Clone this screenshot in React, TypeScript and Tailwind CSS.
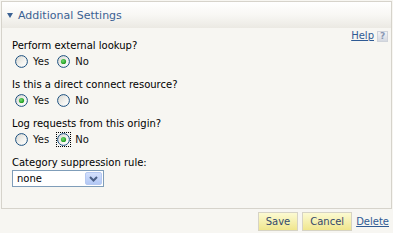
import React from "react";

const FONT = "font-['DejaVu_Sans',Verdana,sans-serif]";

interface RadioProps {
  checked?: boolean;
  focused?: boolean;
}

function Radio({ checked = false, focused = false }: RadioProps) {
  const svg = (
    <svg width="13" height="13" viewBox="0 0 13 13" className="block">
      <defs>
        <linearGradient id="rg" x1="0" y1="0" x2="1" y2="1">
          <stop offset="0" stopColor="#d6d5cf" />
          <stop offset="0.6" stopColor="#f4f4f1" />
          <stop offset="1" stopColor="#ffffff" />
        </linearGradient>
        <radialGradient id="dot" cx="0.4" cy="0.4" r="0.6">
          <stop offset="0" stopColor="#6fdc6f" />
          <stop offset="1" stopColor="#1f9a1f" />
        </radialGradient>
      </defs>
      <circle cx="6.5" cy="6.5" r="5.9" fill="url(#rg)" stroke="#1c5180" strokeWidth="1" />
      {checked && <circle cx="6.5" cy="6.5" r="2.6" fill="url(#dot)" />}
    </svg>
  );
  if (focused) {
    return (
      <span className="-m-px block border border-dotted border-black">{svg}</span>
    );
  }
  return svg;
}

interface GroupProps {
  label: string;
  value: "yes" | "no";
  focusNo?: boolean;
  first?: boolean;
}

function RadioGroup({ label, value, focusNo, first }: GroupProps) {
  return (
    <div className={first ? "" : "mt-[10px]"}>
      <div className="h-[12px] leading-[12px] text-black">{label}</div>
      <div className="mt-[2px] flex h-[15px] items-center pl-[3px] leading-[12px] text-[#111]">
        <Radio checked={value === "yes"} />
        <span className="ml-[5px]">Yes</span>
        <span className="ml-[8px]">
          <Radio checked={value === "no"} focused={focusNo} />
        </span>
        <span className="ml-[5px]">No</span>
      </div>
    </div>
  );
}

export default function App() {
  return (
    <div className={`h-[233px] w-full bg-[#f7f6f2] pt-px text-[10px] ${FONT}`}>
      <div className="mx-px border border-[#d6d3cb]">
        {/* Header */}
        <div className="flex h-[26px] items-center bg-gradient-to-b from-white via-[#f8f7f4] to-[#ebe9e3] pl-[5px]">
          <svg width="6" height="5" viewBox="0 0 6 5" className="mt-px">
            <path d="M0 0 H6 L3 5 Z" fill="#3b6193" />
          </svg>
          <span className="ml-[5px] text-[11px] leading-[13px] text-[#3b6193]">
            Additional Settings
          </span>
        </div>

        {/* Body */}
        <div className="pl-[10px] pr-[3px] pb-[21px] pt-[2px]">
          <div className="flex h-[10px] items-start justify-end">
            <a href="#" className="leading-[12px] text-[#2f5a94] underline">
              Help
            </a>
            <span className="ml-[3px] mt-px flex h-[11px] w-[11px] items-center justify-center border border-[#cfd3da] bg-gradient-to-b from-[#f2f3f6] to-[#d5d9e1] text-[9px] font-bold leading-none text-[#8a98b3]">
              ?
            </span>
          </div>

          <RadioGroup first label="Perform external lookup?" value="no" />
          <RadioGroup label="Is this a direct connect resource?" value="yes" />
          <RadioGroup label="Log requests from this origin?" value="no" focusNo />

          <div className="mt-[10px]">
            <div className="h-[12px] leading-[12px] text-black">Category suppression rule:</div>
            <div className="mt-px flex h-[17px] w-[92px] items-center justify-between border border-[#7f9db9] bg-white pl-[4px] pr-px">
              <span className="leading-[12px] text-black">none</span>
              <span className="flex h-[13px] w-[17px] items-center justify-center rounded-[2px] border border-[#b6c9f2] bg-gradient-to-b from-[#d3e0fd] to-[#b3c8f5]">
                <svg width="9" height="6" viewBox="0 0 9 6">
                  <path d="M1 1 L4.5 4.5 L8 1" fill="none" stroke="#4a5f86" strokeWidth="2" />
                </svg>
              </span>
            </div>
          </div>
        </div>
      </div>

      {/* Footer */}
      <div className="mt-[3px] flex items-center justify-end pr-[4px]">
        <button
          type="button"
          className="h-[19px] border border-[#d6d3c5] bg-gradient-to-b from-[#fcfad2] to-[#f0e68c] px-[7px] leading-[12px] text-[#34496b]"
        >
          Save
        </button>
        <button
          type="button"
          className="ml-[4px] h-[19px] border border-[#d6d3c5] bg-gradient-to-b from-[#fcfad2] to-[#f0e68c] px-[7px] leading-[12px] text-[#34496b]"
        >
          Cancel
        </button>
        <a href="#" className="ml-[4px] leading-[12px] text-[#2f5a94] underline">
          Delete
        </a>
      </div>
    </div>
  );
}
